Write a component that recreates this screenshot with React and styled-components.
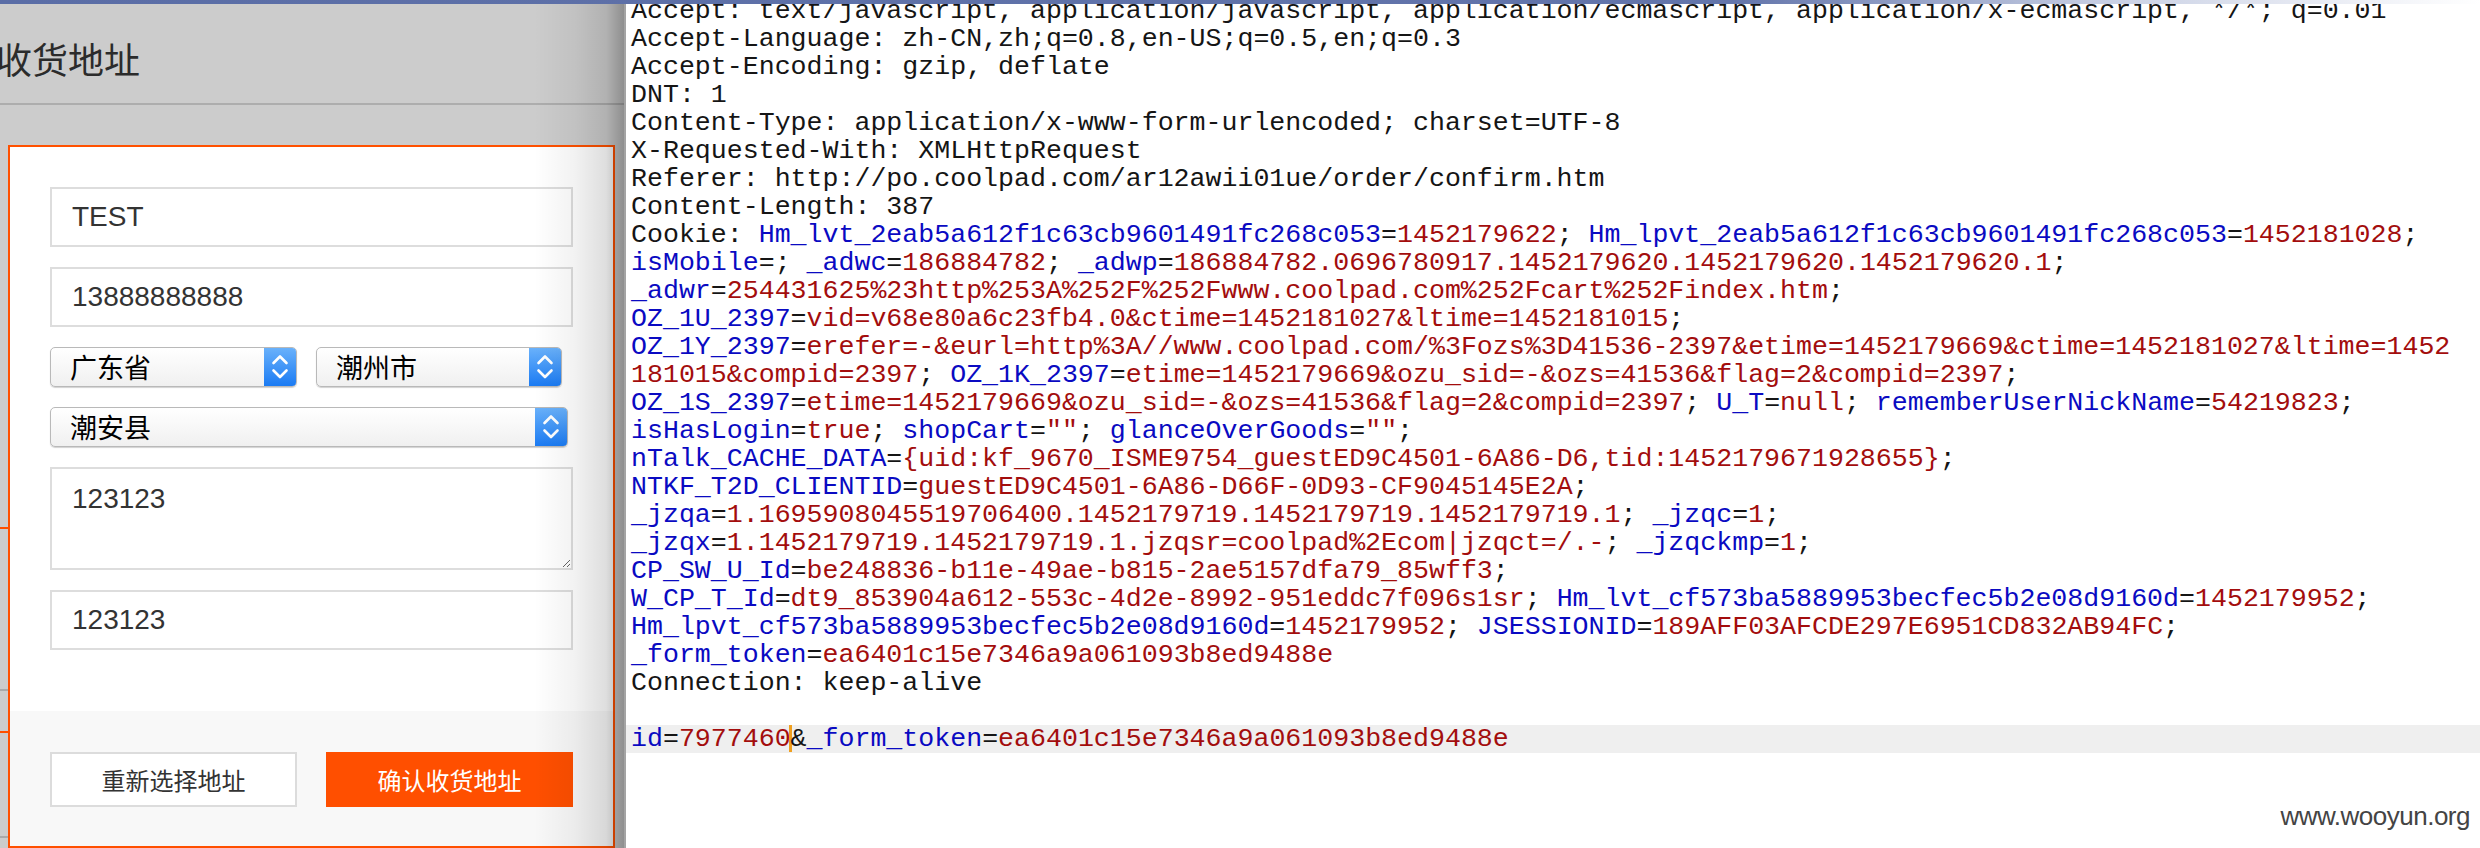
import styled, { createGlobalStyle } from "styled-components";

const GlobalStyle = createGlobalStyle`
  html, body {
    margin: 0;
    padding: 0;
    background: #fff;
  }
  body {
    font-family: "Liberation Sans", "Noto Sans CJK SC", sans-serif;
  }
`;

const Screen = styled.div`
  position: relative;
  display: flex;
  width: 2480px;
  height: 848px;
  overflow: hidden;
`;

const TopEdge = styled.div`
  position: absolute;
  top: 0;
  left: 0;
  right: 0;
  height: 4px;
  z-index: 5;
  background: linear-gradient(to right, #5a6da6 0%, #6375ab 70%, #c9d0e4 85%, #fff 100%);
`;

/* ---------- left: phone page with the address dialog ---------- */

const PhonePage = styled.div`
  position: relative;
  flex: 0 0 624px;
  display: flex;
  flex-direction: column;
  background: #cccccc;
  overflow: hidden;
`;

const PageHeader = styled.div`
  box-sizing: border-box;
  height: 105px;
  padding-top: 13px;
  display: flex;
  align-items: center;
  border-bottom: 2px solid #adadad;
`;

const PageTitle = styled.h1`
  margin: 0 0 0 -4px;
  font-family: "Noto Sans CJK SC", sans-serif;
  font-weight: 400;
  font-size: 36px;
  color: #2b2b2b;
`;

const PageBody = styled.div`
  flex: 1;
  display: flex;
  padding-top: 40px;
`;

const EdgeStrip = styled.div`
  flex: 0 0 8px;
  background:
    linear-gradient(#ff5000, #ff5000) 0 382px / 100% 2px no-repeat,
    linear-gradient(#a9a9a9, #a9a9a9) 0 544px / 100% 2px no-repeat,
    linear-gradient(#ff5000, #ff5000) 0 586px / 100% 2px no-repeat,
    linear-gradient(#a9a9a9, #a9a9a9) 0 691px / 100% 2px no-repeat;
`;

const Dialog = styled.div`
  box-sizing: border-box;
  width: 607px;
  border: 2px solid #ff5000;
  background: #fff;
  display: flex;
  flex-direction: column;
`;

const Form = styled.div`
  display: flex;
  flex-direction: column;
  gap: 20px;
  padding: 40px 40px 61px;
`;

const TextInput = styled.input`
  box-sizing: border-box;
  width: 523px;
  height: 60px;
  margin: 0;
  padding: 0 20px;
  border: 2px solid #dddddd;
  border-radius: 0;
  background: #fff;
  font-family: "Liberation Sans", sans-serif;
  font-size: 28px;
  color: #333;
  outline: none;
`;

const AreaInput = styled.textarea`
  box-sizing: border-box;
  width: 523px;
  height: 103px;
  margin: 0;
  padding: 14px 20px;
  border: 2px solid #dddddd;
  border-radius: 0;
  font-family: "Liberation Sans", sans-serif;
  font-size: 28px;
  line-height: 32px;
  color: #333;
  outline: none;
  resize: both;
`;

const SelectRow = styled.div`
  display: flex;
  gap: 19px;
`;

const SelectBox = styled.div`
  box-sizing: border-box;
  width: ${(p) => p.$w}px;
  height: 40px;
  display: flex;
  align-items: center;
  border: 1px solid #b9b9b9;
  border-radius: 5px;
  background: linear-gradient(#ffffff, #f0f0f0);
  box-shadow: 0 1px 1px rgba(0, 0, 0, 0.18);
  overflow: hidden;
`;

const SelectText = styled.span`
  flex: 1;
  padding-left: 19px;
  font-family: "Noto Sans CJK SC", sans-serif;
  font-size: 27px;
  line-height: 38px;
  color: #000;
`;

const Stepper = styled.span`
  flex: 0 0 32px;
  height: 100%;
  display: flex;
  align-items: center;
  justify-content: center;
  background: linear-gradient(#69b1fb, #1b7bf3);
`;

const Footer = styled.div`
  flex: 1;
  display: flex;
  align-items: flex-start;
  gap: 29px;
  padding: 41px 40px 0;
  background: #f8f8f8;
`;

const ActionButton = styled.button`
  box-sizing: border-box;
  width: 247px;
  height: 55px;
  margin: 0;
  border: 2px solid ${(p) => (p.$primary ? "#ff4f00" : "#dcdcdc")};
  border-radius: 0;
  background: ${(p) => (p.$primary ? "#ff4f00" : "#fff")};
  color: ${(p) => (p.$primary ? "#fff" : "#333")};
  font-family: "Noto Sans CJK SC", sans-serif;
  font-size: 24px;
  padding: 0;
`;

const ShadowFade = styled.div`
  position: absolute;
  top: 0;
  right: 0;
  bottom: 0;
  width: 90px;
  pointer-events: none;
  background: linear-gradient(
    to right,
    rgba(0, 0, 0, 0) 0%,
    rgba(0, 0, 0, 0.05) 45%,
    rgba(0, 0, 0, 0.13) 80%,
    rgba(0, 0, 0, 0.3) 100%
  );
`;

/* ---------- right: raw request view ---------- */

const RequestPane = styled.div`
  position: relative;
  flex: 1;
  border-left: 2px solid #a4a4a4;
  background: #fff;
  overflow: hidden;
`;

const Code = styled.div`
  margin-top: -3px;
  font-family: "Liberation Mono", monospace;
  font-size: 26.6px;
  color: #151515;
`;

const CodeLine = styled.div`
  height: 28px;
  line-height: 28px;
  padding-left: 5px;
  white-space: pre;
  background: ${(p) => (p.$active ? "#efefef" : "transparent")};
`;

const Tok = styled.span`
  color: ${(p) => (p.$kind === "k" ? "#0a0ac2" : p.$kind === "v" ? "#a30d0d" : "#151515")};
`;

const Caret = styled.span`
  display: inline-block;
  width: 3px;
  height: 27px;
  margin: 0 -1px 0 -2px;
  vertical-align: top;
  background: #f0a020;
`;

const Watermark = styled.div`
  position: absolute;
  right: 10px;
  bottom: 16px;
  font-family: "Liberation Sans", sans-serif;
  font-size: 26px;
  color: #444;
  letter-spacing: -0.5px;
`;

const plain = (s) => [["p", s]];

// split a cookie line into key / = / value / ; pieces
const cookie = (str, continued) => {
  const out = [];
  str.split("; ").forEach((part, i) => {
    let seg = part;
    let tail = "";
    if (i > 0) out.push(["p", "; "]);
    if (seg.endsWith(";")) {
      seg = seg.slice(0, -1);
      tail = ";";
    }
    if (i === 0 && continued) {
      out.push(["v", seg]);
    } else {
      const eq = seg.indexOf("=");
      out.push(["k", seg.slice(0, eq)], ["p", "="], ["v", seg.slice(eq + 1)]);
    }
    if (tail) out.push(["p", tail]);
  });
  return out;
};

const lines = [
  plain("Accept: text/javascript, application/javascript, application/ecmascript, application/x-ecmascript, */*; q=0.01"),
  plain("Accept-Language: zh-CN,zh;q=0.8,en-US;q=0.5,en;q=0.3"),
  plain("Accept-Encoding: gzip, deflate"),
  plain("DNT: 1"),
  plain("Content-Type: application/x-www-form-urlencoded; charset=UTF-8"),
  plain("X-Requested-With: XMLHttpRequest"),
  plain("Referer: http://po.coolpad.com/ar12awii01ue/order/confirm.htm"),
  plain("Content-Length: 387"),
  [["p", "Cookie: "], ...cookie("Hm_lvt_2eab5a612f1c63cb9601491fc268c053=1452179622; Hm_lpvt_2eab5a612f1c63cb9601491fc268c053=1452181028;")],
  cookie("isMobile=; _adwc=186884782; _adwp=186884782.0696780917.1452179620.1452179620.1452179620.1;"),
  cookie("_adwr=254431625%23http%253A%252F%252Fwww.coolpad.com%252Fcart%252Findex.htm;"),
  cookie("OZ_1U_2397=vid=v68e80a6c23fb4.0&ctime=1452181027&ltime=1452181015;"),
  cookie("OZ_1Y_2397=erefer=-&eurl=http%3A//www.coolpad.com/%3Fozs%3D41536-2397&etime=1452179669&ctime=1452181027&ltime=1452"),
  cookie("181015&compid=2397; OZ_1K_2397=etime=1452179669&ozu_sid=-&ozs=41536&flag=2&compid=2397;", true),
  cookie("OZ_1S_2397=etime=1452179669&ozu_sid=-&ozs=41536&flag=2&compid=2397; U_T=null; rememberUserNickName=54219823;"),
  cookie('isHasLogin=true; shopCart=""; glanceOverGoods="";'),
  cookie("nTalk_CACHE_DATA={uid:kf_9670_ISME9754_guestED9C4501-6A86-D6,tid:1452179671928655};"),
  cookie("NTKF_T2D_CLIENTID=guestED9C4501-6A86-D66F-0D93-CF9045145E2A;"),
  cookie("_jzqa=1.1695908045519706400.1452179719.1452179719.1452179719.1; _jzqc=1;"),
  cookie("_jzqx=1.1452179719.1452179719.1.jzqsr=coolpad%2Ecom|jzqct=/.-; _jzqckmp=1;"),
  cookie("CP_SW_U_Id=be248836-b11e-49ae-b815-2ae5157dfa79_85wff3;"),
  cookie("W_CP_T_Id=dt9_853904a612-553c-4d2e-8992-951eddc7f096s1sr; Hm_lvt_cf573ba5889953becfec5b2e08d9160d=1452179952;"),
  cookie("Hm_lpvt_cf573ba5889953becfec5b2e08d9160d=1452179952; JSESSIONID=189AFF03AFCDE297E6951CD832AB94FC;"),
  cookie("_form_token=ea6401c15e7346a9a061093b8ed9488e"),
  plain("Connection: keep-alive"),
  plain(" "),
];

const StepIcon = () => (
  <svg width="32" height="38" viewBox="0 0 32 38" fill="none">
    <path d="M9.5 15 L16 8.5 L22.5 15" stroke="#fff" strokeWidth="2.6" strokeLinecap="round" strokeLinejoin="round" />
    <path d="M9.5 22.5 L16 29 L22.5 22.5" stroke="#fff" strokeWidth="2.6" strokeLinecap="round" strokeLinejoin="round" />
  </svg>
);

const Select = ({ w, children }) => (
  <SelectBox $w={w}>
    <SelectText>{children}</SelectText>
    <Stepper>
      <StepIcon />
    </Stepper>
  </SelectBox>
);

const App = () => {
  return (
    <>
      <GlobalStyle />
      <Screen>
        <TopEdge />
        <PhonePage>
          <PageHeader>
            <PageTitle>收货地址</PageTitle>
          </PageHeader>
          <PageBody>
            <EdgeStrip />
            <Dialog>
              <Form>
                <TextInput readOnly defaultValue="TEST" />
                <TextInput readOnly defaultValue="13888888888" />
                <SelectRow>
                  <Select w={247}>广东省</Select>
                  <Select w={246}>潮州市</Select>
                </SelectRow>
                <Select w={518}>潮安县</Select>
                <AreaInput readOnly defaultValue="123123" />
                <TextInput readOnly defaultValue="123123" />
              </Form>
              <Footer>
                <ActionButton>重新选择地址</ActionButton>
                <ActionButton $primary>确认收货地址</ActionButton>
              </Footer>
            </Dialog>
          </PageBody>
          <ShadowFade />
        </PhonePage>

        <RequestPane>
          <Code>
            {lines.map((toks, i) => (
              <CodeLine key={i}>
                {toks.map(([kind, text], j) => (
                  <Tok key={j} $kind={kind}>{text}</Tok>
                ))}
              </CodeLine>
            ))}
            <CodeLine $active>
              <Tok $kind="k">id</Tok>
              <Tok $kind="p">=</Tok>
              <Tok $kind="v">7977460</Tok>
              <Caret />
              <Tok $kind="p">&amp;</Tok>
              <Tok $kind="k">_form_token</Tok>
              <Tok $kind="p">=</Tok>
              <Tok $kind="v">ea6401c15e7346a9a061093b8ed9488e</Tok>
            </CodeLine>
          </Code>
          <Watermark>www.wooyun.org</Watermark>
        </RequestPane>
      </Screen>
    </>
  );
};

export default App;
